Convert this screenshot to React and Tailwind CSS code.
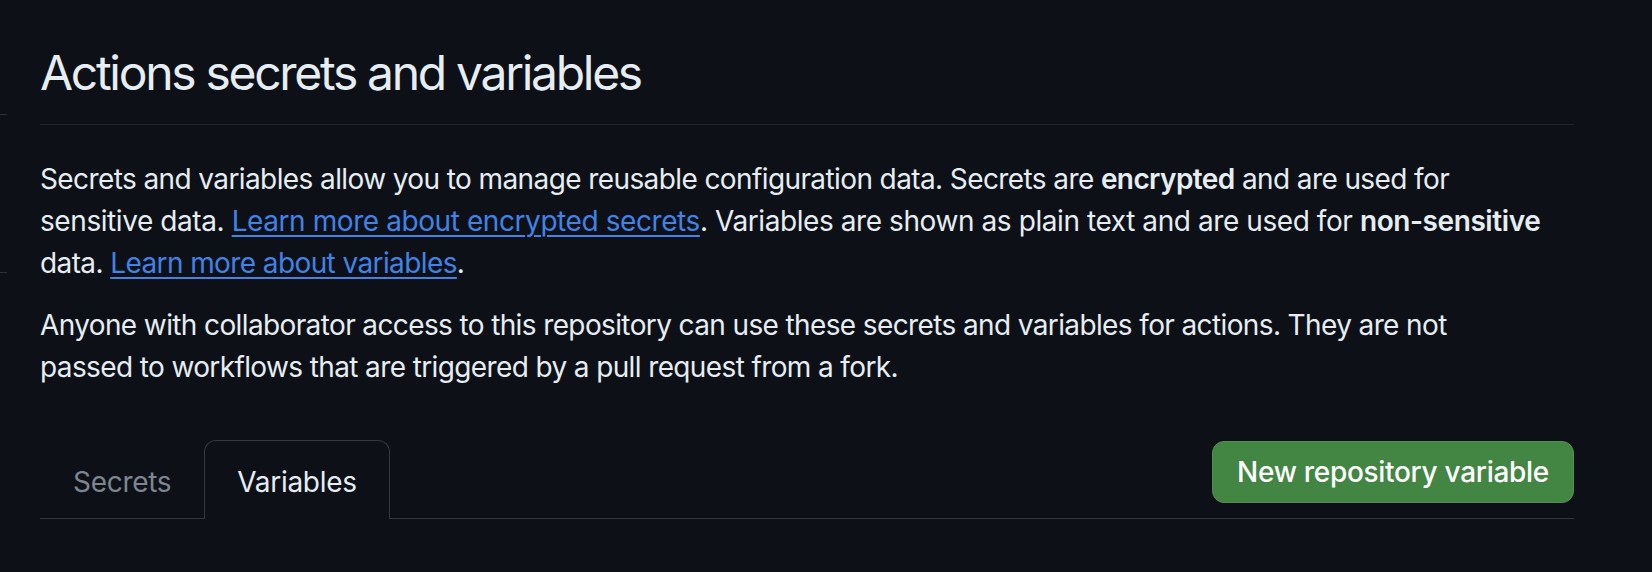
const SettingsHeader = () => (
  <div className="pt-[43px] pb-[21px] border-b border-[#21262d]">
    <h1 className="text-[48px] leading-[60px] font-normal tracking-[-2.3px] text-[#e6edf3]">Actions secrets and variables</h1>
  </div>
);

const Link = ({ children }) => (
  <a href="#" className="text-[#4182e6] underline underline-offset-[4px] decoration-[2px]">
    {children}
  </a>
);

const App = () => {
  return (
    <div className="min-h-screen bg-[#0d1117] flex font-['Inter','Liberation_Sans',sans-serif] text-[#e6edf3]">
      <div className="w-[8px] flex flex-col">
        <div className="mt-[114px] h-px w-[7px] bg-[#2b3036]" />
        <div className="mt-[157px] h-px w-[7px] bg-[#2b3036]" />
      </div>
      <main className="ml-[32px] w-[1534px]">
        <SettingsHeader />

        <p className="mt-[33px] text-[28px] leading-[42px] tracking-[-0.6px] whitespace-nowrap">
          Secrets and variables allow you to manage reusable configuration data. Secrets are{' '}
          <strong className="font-semibold">encrypted</strong> and are used for
          <br />
          <span className="tracking-[-0.42px]">
            sensitive data. <Link>Learn more about encrypted secrets</Link>. Variables are shown as plain text and are used
            for <strong className="font-semibold">non-sensitive</strong>
          </span>
          <br />
          data. <Link>Learn more about variables</Link>.
        </p>
        <p className="mt-[20px] text-[28px] leading-[42px] tracking-[-0.62px] whitespace-nowrap">
          Anyone with collaborator access to this repository can use these secrets and variables for actions. They are not
          <br />
          passed to workflows that are triggered by a pull request from a fork.
        </p>

        <div className="mt-[52px] flex items-end justify-between border-b border-[#30363d]">
          <nav className="flex tracking-[-0.3px]">
            <a href="#" className="-mb-px px-[32px] pt-[20px] pb-[16px] border-t border-x border-transparent text-[28px] leading-[42px] text-[#7d8590]">
              Secrets
            </a>
            <a href="#" className="-mb-px px-[32px] pt-[20px] pb-[16px] border-t border-x border-[#353a41] rounded-t-[12px] bg-[#0d1117] text-[28px] leading-[42px] text-[#e6edf3]">
              Variables
            </a>
          </nav>
          <button className="mb-[15px] h-[62px] w-[362px] rounded-[12px] bg-[#438543] border border-[#4f8f50] text-white text-[28px] font-medium tracking-[-0.3px]">
            New repository variable
          </button>
        </div>
      </main>
    </div>
  );
};

export default App;
